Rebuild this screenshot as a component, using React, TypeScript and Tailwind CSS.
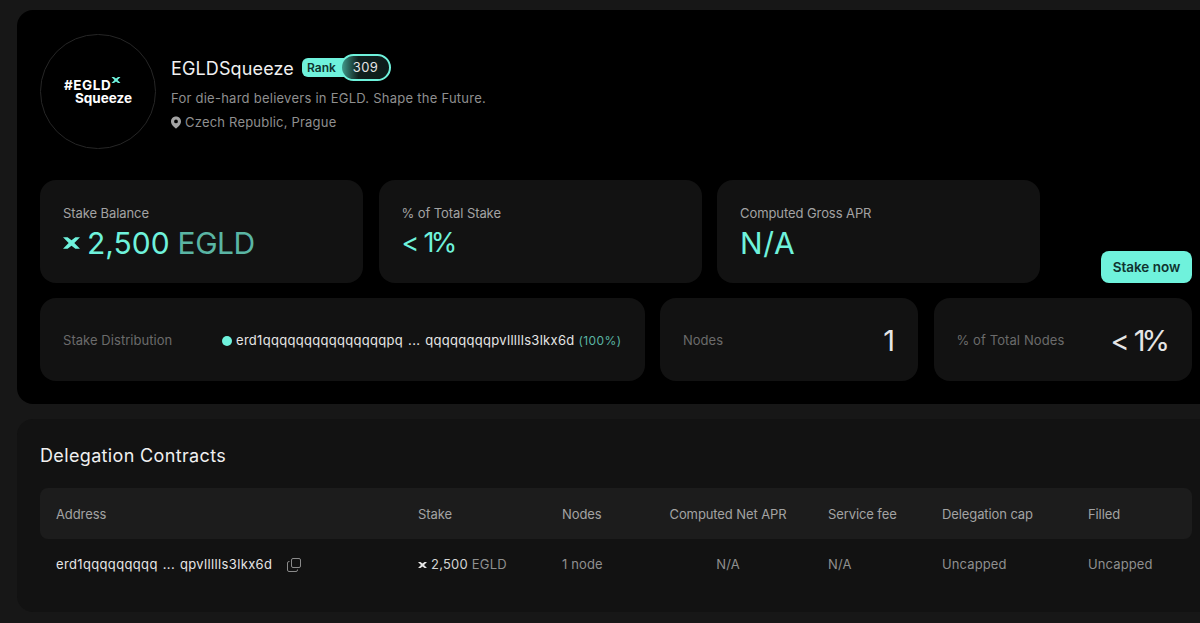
const font = { fontFamily: "Inter, sans-serif" };

function EgldMark({ className }: { className?: string }) {
  return (
    <svg viewBox="0 0 24 16" className={className} fill="currentColor">
      <path d="M0 0 L6.500 0 L12 4 L17.500 0 L24 0 L16 8 L24 16 L17.500 16 L12 12 L6.500 16 L0 16 L8 8 Z" />
    </svg>
  );
}

function StatCard({ label, children }: { label: string; children: React.ReactNode }) {
  return (
    <div className="h-[103px] rounded-2xl bg-[#121212] px-[23px] pt-[25px]">
      <div className="text-[13px] leading-[17px] tracking-[-0.08px] text-[#a3a3a3]">{label}</div>
      <div className="mt-[1px] flex items-center text-[30px] leading-[40px] text-[#6ff2dc]">{children}</div>
    </div>
  );
}

const columns = [
  { title: "Address", value: "", cls: "w-[362px]" },
  { title: "Stake", value: "", cls: "w-[144px]" },
  { title: "Nodes", value: "1 node", cls: "w-[106px]" },
  { title: "Computed Net APR", value: "N/A", cls: "w-[160px] pr-[40px] text-center" },
  { title: "Service fee", value: "N/A", cls: "w-[114px]" },
  { title: "Delegation cap", value: "Uncapped", cls: "w-[146px]" },
  { title: "Filled", value: "Uncapped", cls: "w-[90px]" },
];

export default function App() {
  return (
    <div style={font} className="h-[623px] w-[1200px] overflow-hidden bg-[#171717] pl-[17px] pt-[10px]">
      <div className="h-[394px] rounded-l-2xl bg-black pl-[23px] pr-2 pt-6">
        {/* Header */}
        <div className="flex">
          <div className="flex h-[115px] w-[116px] shrink-0 items-center justify-center rounded-full border border-[#262626]">
            <div className="text-[13.500px] leading-[13px] font-bold text-white">
              <div className="flex tracking-[0.6px]">
                #EGLD
                <EgldMark className="mt-[-2px] h-[6px] w-[10px] text-[#6ff2dc]" />
              </div>
              <div className="pl-[11px]">Squeeze</div>
            </div>
          </div>
          <div className="ml-[15px] pt-[22px]">
            <div className="flex h-[26px] items-center">
              <span className="text-[18px] leading-[26px] tracking-[0.13px] text-[#f0f0f0]">EGLDSqueeze</span>
              <div className="ml-2 mt-[-3px] flex items-center">
                <span className="flex h-[19px] w-[44px] items-center rounded-l-md bg-[#6ff2dc] pl-[5px] text-[12px] font-semibold text-[#10332f]">
                  Rank
                </span>
                <span className="ml-[-6px] flex h-[27px] w-[51px] items-center justify-center rounded-full border-2 border-[#6ff2dc] bg-linear-to-r from-[#3f9c8c] via-[#10211f] via-35% to-[#0d1c1b] text-[13px] tracking-[0.4px] text-[#e5e5e5]">
                  309
                </span>
              </div>
            </div>
            <div className="mt-[6px] text-[13px] leading-[20px] tracking-[0.25px] text-[#8f8f8f]">
              For die-hard believers in EGLD. Shape the Future.
            </div>
            <div className="mt-[4px] flex items-center text-[13px] leading-[20px] tracking-[0.2px] text-[#8f8f8f]">
              <svg viewBox="0 0 24 24" className="ml-[-1px] mr-[3px] h-[13px] w-[12px]" fill="#a3a3a3">
                <path
                  fillRule="evenodd"
                  d="M12 0C6 0 2 4.400 2 9.800 2 16.500 9.500 22.200 12 24c2.500-1.800 10-7.500 10-14.200C22 4.400 18 0 12 0zm0 6a3.800 3.800 0 1 1 0 7.600A3.800 3.800 0 0 1 12 6z"
                />
              </svg>
              Czech Republic, Prague
            </div>
          </div>
        </div>

        {/* Stat row */}
        <div className="mt-[31px] flex items-end">
          <div className="grid w-[1000px] grid-cols-3 gap-x-[15.500px]">
            <StatCard label="Stake Balance">
              <EgldMark className="mr-[7px] h-[12px] w-[17px]" />
              2,500
              <span className="ml-[8px] tracking-[-0.5px] text-[#5ab5a4]">EGLD</span>
            </StatCard>
            <StatCard label="% of Total Stake">
              <span className="text-[27px]">&lt;</span>
              <span className="ml-[4px] text-[27px] tracking-[-3.500px]">1%</span>
            </StatCard>
            <StatCard label="Computed Gross APR">
              <span className="tracking-[0.6px]">N/A</span>
            </StatCard>
          </div>
          <button className="ml-auto h-[32px] w-[91px] rounded-lg bg-[#6ff2dc] text-[13.500px] font-semibold text-[#10332f]">
            Stake now
          </button>
        </div>

        {/* Distribution row */}
        <div className="mt-[15px] flex h-[83px] gap-x-[15.500px]">
          <div className="flex w-[604.500px] items-center rounded-2xl bg-[#121212] pl-[23px] pt-[2px]">
            <span className="w-[159px] text-[13px] tracking-[0.05px] text-[#6b6b6b]">Stake Distribution</span>
            <span className="h-[10px] w-[10px] rounded-full bg-[#6ff2dc]" />
            <span className="ml-[4px] text-[13px] tracking-[0.3px] [word-spacing:1px] text-[#e5e5e5]">
              erd1qqqqqqqqqqqqqqqpq ... qqqqqqqqpvllllls3lkx6d
            </span>
            <span className="ml-[4px] text-[12px] tracking-[0.4px] text-[#5ab5a4]">(100%)</span>
          </div>
          <div className="flex w-[258px] items-center justify-between rounded-2xl bg-[#121212] px-[23px] pt-[2px]">
            <span className="text-[13px] text-[#6b6b6b]">Nodes</span>
            <span className="text-[29px] text-[#e5e5e5]">1</span>
          </div>
          <div className="flex w-[258.500px] items-center justify-between rounded-2xl bg-[#121212] px-[23px] pt-[2px]">
            <span className="text-[13px] tracking-[0.1px] text-[#6b6b6b]">% of Total Nodes</span>
            <span className="mr-[3px] flex items-baseline text-[29px] text-[#e5e5e5]">
              &lt;
              <span className="ml-[4px] tracking-[-4px]">1%</span>
            </span>
          </div>
        </div>
      </div>

      {/* Delegation contracts */}
      <div className="mt-[15px] h-[193px] rounded-l-2xl bg-[#121212] pl-[23px] pt-[23px]">
        <h2 className="text-[18px] leading-[28px] tracking-[0.35px] text-[#f0f0f0]">Delegation Contracts</h2>
        <div className="mt-[18px] w-[1152px]">
          <div className="flex h-[51px] items-center rounded-lg bg-[#1c1c1c] pl-[16px] pt-[3px] text-[13px] tracking-[-0.1px] text-[#a3a3a3]">
            {columns.map((c) => (
              <div key={c.title} className={c.cls}>
                {c.title}
              </div>
            ))}
          </div>
          <div className="flex h-[51px] items-center pl-[16px] text-[13px] tracking-[0.12px] text-[#8f8f8f]">
            <div className="flex w-[362px] items-center tracking-[0.35px] [word-spacing:1px] text-[#e5e5e5]">
              erd1qqqqqqqqq ... qpvllllls3lkx6d
              <svg viewBox="0 0 14 14" className="ml-[15px] h-[14px] w-[14px]" fill="none" stroke="#8a8a8a" strokeWidth="1">
                <rect x="4.500" y="0.500" width="9" height="9" rx="1.500" />
                <path d="M2.500 3.500H2A1.500 1.500 0 0 0 0.500 5v7A1.500 1.500 0 0 0 2 13.500h7a1.500 1.500 0 0 0 1.500-1.500v-.5" />
              </svg>
            </div>
            <div className="flex w-[144px] items-center">
              <EgldMark className="mr-[4px] h-[6px] w-[9px] text-[#e5e5e5]" />
              <span className="tracking-[0.2px] text-[#d4d4d4]">2,500</span>
              <span className="ml-[4px] tracking-[0.2px] text-[#8f8f8f]">EGLD</span>
            </div>
            {columns.slice(2).map((c) => (
              <div key={c.title} className={c.cls}>
                {c.value}
              </div>
            ))}
          </div>
        </div>
      </div>
    </div>
  );
}
